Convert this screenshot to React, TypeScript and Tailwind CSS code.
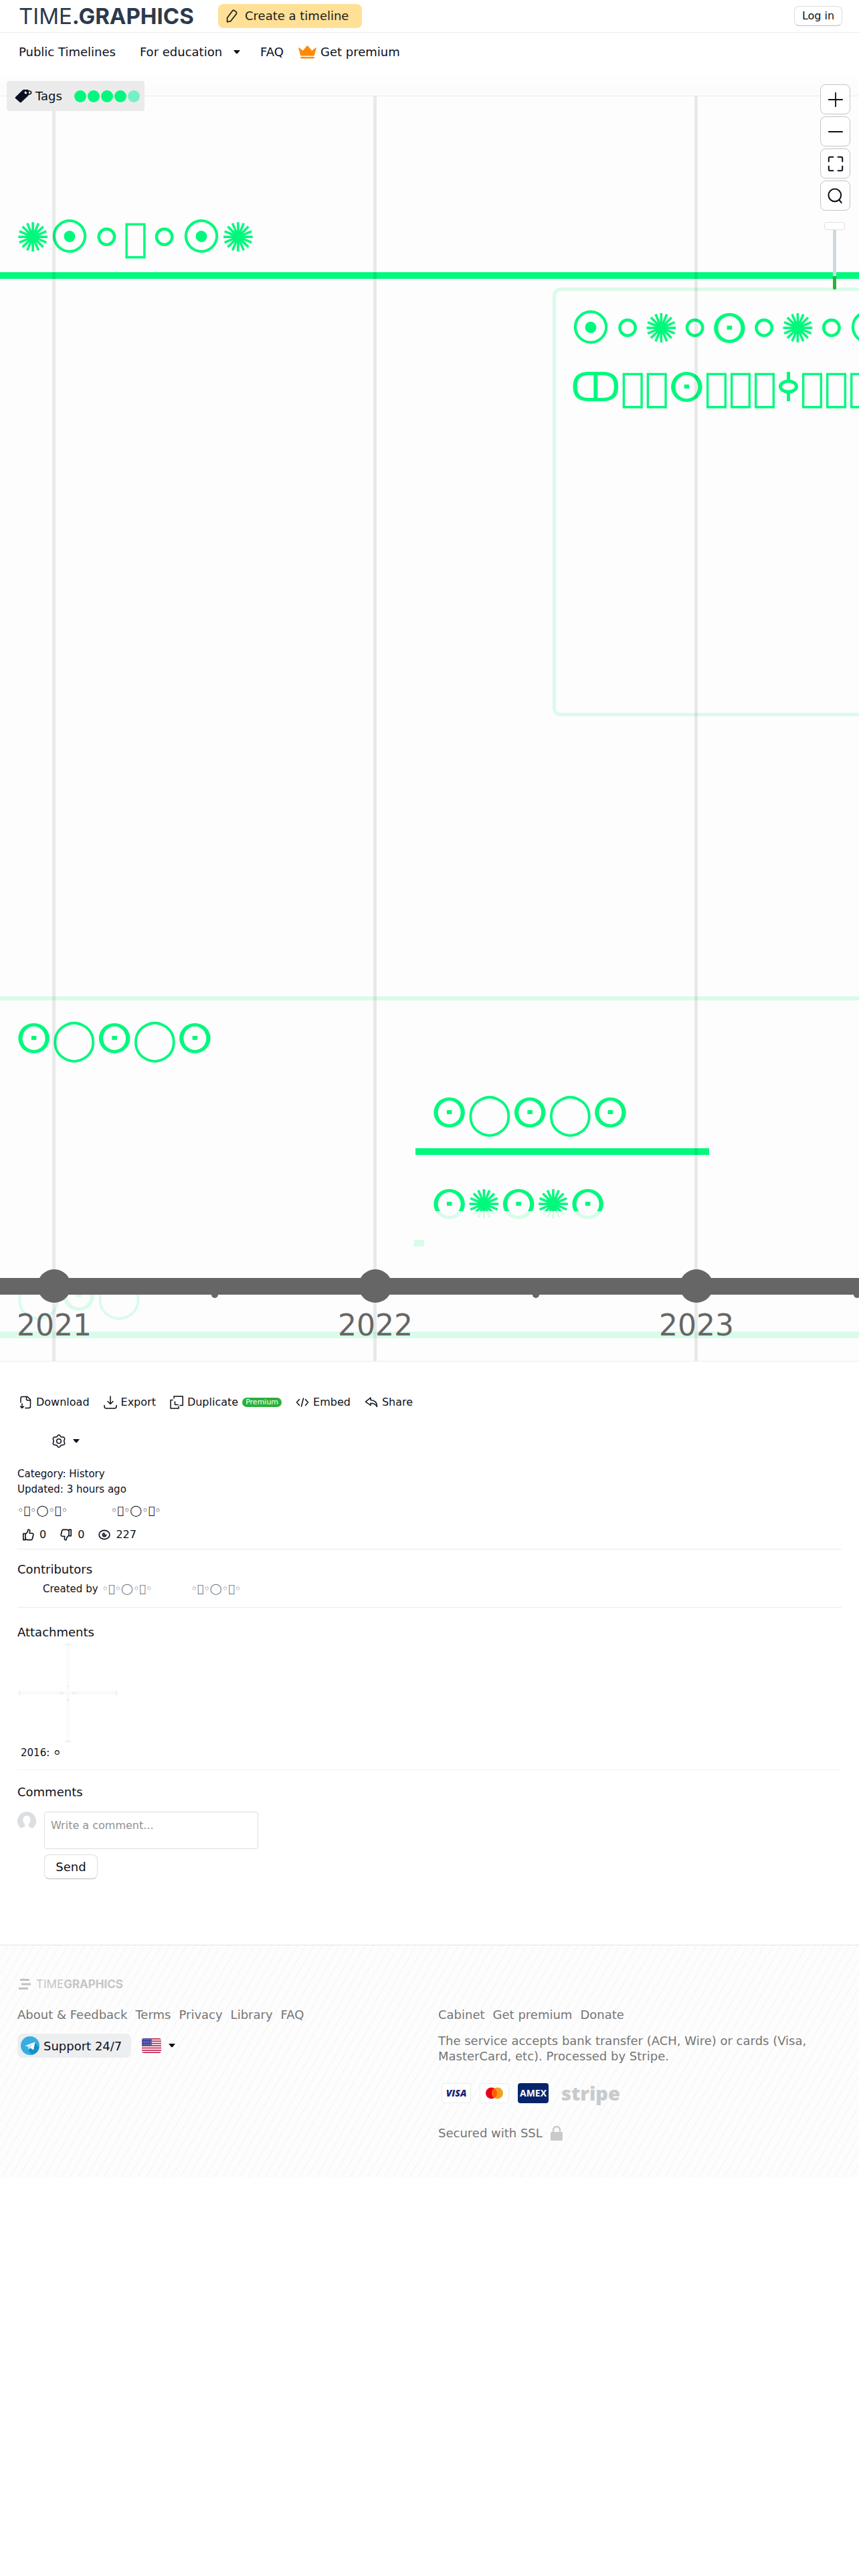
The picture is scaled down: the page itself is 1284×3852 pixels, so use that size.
import type { ReactNode } from "react";

const NAV_TEXT = "text-lg leading-6";

const YEARS = [
  { label: "2021", x: 81 },
  { label: "2022", x: 561 },
  { label: "2023", x: 1041 },
];

const HALF_YEARS = [321, 801, 1281];

const TITLES = [
  { text: "✺⦿⚪\uE0FF⚪⦿✺", x: 24, y: 166 },
  { text: "ⵙ◯ⵙ◯ⵙ", x: 24, y: 1364 },
  { text: "ⵙ◯ⵙ◯ⵙ", x: 645, y: 1475 },
  { text: "ⵙ✺ⵙ✺ⵙ", x: 645, y: 1612 },
  { text: "◯ⵙ◯", x: 24, y: 1749 },
];

const TAG_COLORS = ["#00f97c", "#00f97c", "#00f97c", "#00f97c", "#76f1c6"];

const AUTHOR = "◦\uE0FF◦◯◦\uE0FF◦";

function Caret() {
  return (
    <svg viewBox="0 0 10 6" className="w-[10px] h-[6px]" fill="currentColor" aria-hidden="true">
      <path d="M0 0h10L6.2 4.7c-.7.8-1.700.8-2.400 0z" />
    </svg>
  );
}

function LineIcon({ children, size = "w-5 h-5", width = 1.5 }: { children: ReactNode; size?: string; width?: number }) {
  return (
    <svg
      viewBox="0 0 20 20"
      className={`${size} shrink-0`}
      fill="none"
      stroke="currentColor"
      strokeWidth={width}
      strokeLinecap="round"
      strokeLinejoin="round"
      aria-hidden="true"
    >
      {children}
    </svg>
  );
}

function Header() {
  return (
    <header className="flex items-center h-[49px] border-b border-[#ebebeb] bg-white pl-7 pr-[25px]">
      <a href="#home" className="w-[298px] font-['Inter'] text-[33px] leading-10 text-[#2c3a4b]">
        TIME<b>.GRAPHICS</b>
      </a>
      <button className="flex items-center gap-[9px] h-9 pl-[9px] pr-5 rounded-lg bg-[#ffe096] text-lg text-[#1a1a1a]">
        <LineIcon size="w-[22px] h-[22px]">
          <path d="M4.200 12.500 11.300 3a2 2 0 0 1 2.900-.3l2 1.600a2 2 0 0 1 .3 2.900l-7.900 10-4.400.8z" />
        </LineIcon>
        Create a timeline
      </button>
      <button className="ml-auto h-[30px] w-[72px] rounded-lg border border-[#dddddd] border-b-[#bbbbbb] bg-white text-base leading-5">
        Log in
      </button>
    </header>
  );
}

function Nav() {
  return (
    <nav className={`flex items-start h-[94px] pt-[17px] pl-7 bg-[linear-gradient(to_bottom,#ffffff_60px,#fcfcfc_80px)] ${NAV_TEXT}`}>
      <a href="#public" className="mr-9">Public Timelines</a>
      <button className="flex items-center gap-[17px] mr-[30px]">
        For education
        <Caret />
      </button>
      <a href="#faq" className="mr-[22px]">FAQ</a>
      <a href="#premium" className="flex items-center gap-[6px]">
        <svg viewBox="0 0 27 20" className="w-[27px] h-5" fill="#ff8a00" aria-hidden="true">
          <path d="M3 14.500.3 4.200c-.2-.9.500-1.400 1.200-.8l5.200 4.300L12.500.8c.5-.8 1.300-.8 1.800 0l6 6.900 5.200-4.300c.7-.6 1.400 0 1.200.8L24 14.500c-.2.800-.5 1-1.200 1H4.200c-.7 0-1-.2-1.200-1z" />
          <rect x="3.300" y="17" width="20.400" height="2.500" rx=".6" />
        </svg>
        Get premium
      </a>
    </nav>
  );
}

function TagsBar() {
  return (
    <button className="absolute left-[10px] -top-[23px] z-20 flex items-center h-[45px] pl-3 pr-[7px] rounded bg-[#ebebeb]">
      <svg viewBox="0 0 26 21" className="w-[26px] h-[21px]" aria-hidden="true">
        <path d="M1.200 12 11 2.500C12 1.300 13 1 14.500 1H19c1.500 0 2 .7 2 2v4.500c0 1-.3 2-1.200 2.900L10 19.800c-.9.900-1.800.9-2.600 0L1.200 14.300c-.8-.8-.8-1.500 0-2.300z" fill="#0a0f1f" />
        <circle cx="16.500" cy="5.500" r="1.900" fill="#ebebeb" />
        <path d="M17 4.500c4-2.500 8.500-1.500 7.600 1.500-.5 1.800-3.200 2.400-5.800 1.200" fill="none" stroke="#0a0f1f" strokeWidth="1.600" />
      </svg>
      <span className="ml-[5px] mr-[18px] text-lg leading-6">Tags</span>
      <span className="flex gap-[2px]">
        {TAG_COLORS.map((color, i) => (
          <span key={i} className="w-[18px] h-[18px] rounded-full" style={{ backgroundColor: color }} />
        ))}
      </span>
    </button>
  );
}

function ZoomButton({ label, children }: { label: string; children: ReactNode }) {
  return (
    <button
      aria-label={label}
      className="flex items-center justify-center w-[45px] h-[45px] rounded-lg border border-[#c4c4c4] bg-white"
    >
      {children}
    </button>
  );
}

function ZoomControls() {
  return (
    <div className="absolute right-[13px] -top-[18px] z-20 flex flex-col items-center gap-[3px]">
      <ZoomButton label="Zoom in">
        <LineIcon size="w-6 h-6"><path d="M10 1.500v17M1.500 10h17" /></LineIcon>
      </ZoomButton>
      <ZoomButton label="Zoom out">
        <LineIcon size="w-6 h-6"><path d="M1.500 10h17" /></LineIcon>
      </ZoomButton>
      <ZoomButton label="Full screen">
        <LineIcon size="w-6 h-6" width={1.7}>
          <path d="M1.500 7V3q0-1.500 1.500-1.500h4M13 1.500h4q1.500 0 1.500 1.500v4M18.500 13v4q0 1.500-1.500 1.500h-4M7 18.500H3Q1.500 18.500 1.500 17v-4" />
        </LineIcon>
      </ZoomButton>
      <ZoomButton label="Search">
        <LineIcon size="w-6 h-6" width={1.7}>
          <circle cx="9" cy="9" r="7.800" />
          <path d="m14.500 15 2.800 3.500" />
        </LineIcon>
      </ZoomButton>
      <div className="flex flex-col items-center pt-[14px] pr-[3px]">
        <span className="w-[31px] h-3 rounded border border-[#e0e0e0] bg-white" />
        <span className="w-[5px] h-[69px] bg-[#d0d9dd]" />
        <span className="w-[5px] h-5 rounded-b bg-[#2bb03c]" />
      </div>
    </div>
  );
}

function Timeline() {
  return (
    <main className="relative h-[1893px] border-y border-[#ebebeb] bg-[#fdfdfd]">
      <TagsBar />
      <ZoomControls />

      <div className="absolute inset-0 overflow-hidden text-[60px] leading-[90px] text-[#00f97c] whitespace-nowrap">
        {/* Periods */}
        <div className="absolute inset-x-0 top-[263px] h-[10px] bg-[#00f97c]" />
        <div className="absolute inset-x-0 top-[1346px] h-[6px] bg-[#d9fbea]" />
        <div className="absolute left-[621px] top-[1573px] w-[439px] h-[10px] bg-[#00f97c]" />
        <div className="absolute left-[619px] top-[1710px] w-[15px] h-[10px] bg-[#00f97c]" />
        <div className="absolute inset-x-0 top-[1847px] h-[10px] bg-[#00f97c]" />

        {/* Event card */}
        <div className="absolute left-[826px] right-0 top-[286px] h-[641px] overflow-hidden rounded-l-xl border-[5px] border-r-0 border-[#d9fbea] pt-3 pl-[22px] leading-[88px]">
          <p>⦿⚪✺⚪ⵙ⚪✺⚪⦿</p>
          <p>
            ↀ{"\uE0FF\uE0FF"}ⵙ{"\uE0FF\uE0FF\uE0FF"}
            <svg viewBox="0 0 35 44" className="inline-block w-[35px] h-[44px] align-baseline" fill="none" stroke="currentColor" strokeWidth="5" aria-hidden="true">
              <ellipse cx="17.500" cy="22" rx="12" ry="8" />
              <path d="M17.500 0v14M17.500 30v14" />
            </svg>
            {"\uE0FF\uE0FF\uE0FF"}
          </p>
        </div>

        {TITLES.map((title) => (
          <p key={title.y} className="absolute" style={{ left: title.x, top: title.y }}>
            {title.text}
          </p>
        ))}

        {/* Fade over the lower part of the canvas */}
        <div className="absolute inset-x-0 top-[1667px] bottom-0 bg-[#fdfdfd]/86" />
      </div>

      {/* Axis */}
      <div className="absolute inset-0 overflow-hidden text-[#666666]">
        {YEARS.map((year) => (
          <div key={year.label} className="absolute inset-y-0 w-[5px] -ml-[3px] bg-black/8" style={{ left: year.x }} />
        ))}
        <div className="absolute inset-x-0 top-[1767px] h-[25px] bg-[#666666]" />
        {HALF_YEARS.map((x) => (
          <div key={x} className="absolute top-[1787px] w-[10px] h-[10px] -ml-[5px] rounded-full bg-[#666666]" style={{ left: x }} />
        ))}
        {YEARS.map((year) => (
          <div key={year.label} className="absolute top-[1754px] w-[120px] -ml-[60px] flex flex-col items-center" style={{ left: year.x }}>
            <span className="w-[50px] h-[50px] rounded-full bg-[#666666]" />
            <span className="mt-2 text-[44px] leading-[52px]">{year.label}</span>
          </div>
        ))}
      </div>
    </main>
  );
}

function Actions() {
  return (
    <div className="flex flex-col gap-[34px] pt-[49px]">
      <div className="flex items-center gap-[21px] pl-[2px] text-base leading-6">
        <button className="flex items-center gap-[6px]">
          <LineIcon>
            <path d="M3 10V4q0-2.500 2.500-2.500H13l4.500 4.500v10q0 2.500-2.500 2.500h-5M11.500 2v3q0 2 2 2h3.500M5 12v6.500M2.500 16 5 18.500 7.500 16" />
          </LineIcon>
          Download
        </button>
        <button className="flex items-center gap-[6px]">
          <LineIcon>
            <path d="M10 1v11M6 8.500l4 4 4-4M1 14.500v1.500q0 3 3 3h12q3 0 3-3v-1.500" />
          </LineIcon>
          Export
        </button>
        <button className="flex items-center gap-[6px]">
          <LineIcon>
            <path d="M6 4V1h13.200v13.500H15M4 6.500H1V19h12v-3M7.500 9v4.500H12" />
          </LineIcon>
          Duplicate
          <span className="h-[14px] px-[5px] rounded-full bg-[#2bb03c] text-[11px] leading-[14px] text-white">Premium</span>
        </button>
        <button className="flex items-center gap-[6px]">
          <LineIcon>
            <path d="M5.500 5.500 1.500 10l4 4.500M14.500 5.500l4 4.500-4 4.500M11.500 4l-3 12" />
          </LineIcon>
          Embed
        </button>
        <button className="flex items-center gap-[6px]">
          <LineIcon>
            <path d="M9 3 1.500 9.200 9 14.500v-3.300c4.500 0 7.500 1.500 9.500 5.300.2-5.500-2.500-9.500-9.500-10z" />
          </LineIcon>
          Share
        </button>
      </div>
      <button aria-label="Settings" className="flex items-center gap-[11px] w-fit pl-[52px] h-6">
        <LineIcon>
          <path d="M8 1.800Q10-.2 12 1.800l.8 1.700 2 .5q3-.8 4 2.200l-1.200 3.800 1.200 3.300q-.6 2.700-3.500 2.400l-2.300.5-1 2q-2 1.800-4 0l-1-2-2.300-.5q-2.900.3-3.500-2.400L2.400 10 1.200 6.200q1-3 4-2.200l2-.5z" />
          <circle cx="10" cy="10" r="3.300" />
        </LineIcon>
        <Caret />
      </button>
    </div>
  );
}

function Details() {
  return (
    <section className="pt-[26px] pb-[9px] border-b border-[#ebebeb]">
      <p className="text-[15px] leading-[23px]">Category: History</p>
      <p className="text-[15px] leading-[23px]">Updated: 3 hours ago</p>
      <p className="flex gap-[65px] mt-2 text-base leading-6">
        <span>{AUTHOR}</span>
        <span>{AUTHOR}</span>
      </p>
      <div className="flex items-center gap-[21px] mt-3 pl-[7px] text-base leading-6">
        <button className="flex items-center gap-2">
          <LineIcon size="w-[18px] h-[18px]" width={1.8}>
            <path d="M2 8h3.500v10.500H2zM5.500 9 9 5.500 10 1.500q3-.5 3 2.500L12.500 7.500H17q2 .5 1.700 2.500L17 17q-.5 1.500-2 1.500H9L5.500 17" />
          </LineIcon>
          0
        </button>
        <button className="flex items-center gap-2">
          <LineIcon size="w-[18px] h-[18px]" width={1.8}>
            <path d="M18 1.500h-3.500V12H18zM14.500 11 11 14.500l-1 4q-3 .5-3-2.500l.5-3.500H3q-2-.5-1.700-2.500L3 3q.5-1.500 2-1.500h6l3.500 1.500" />
          </LineIcon>
          0
        </button>
        <span className="flex items-center gap-2">
          <LineIcon size="w-[18px] h-[18px]" width={1.8}>
            <ellipse cx="10" cy="10" rx="8.800" ry="7.300" />
            <path d="M10 7.200a2.900 2.900 0 1 0 2.900 2.900" />
            <circle cx="10" cy="10" r=".8" />
          </LineIcon>
          227
        </span>
      </div>
    </section>
  );
}

function Contributors() {
  return (
    <section className="pt-[18px] pb-[14px] border-b border-[#ebebeb]">
      <h2 className="text-lg leading-6">Contributors</h2>
      <p className="flex items-center mt-1 pl-[38px] text-[15px] leading-[26px]">
        Created by
        <a href="#author" className="ml-[6px] mr-[58px] text-base leading-[26px] text-gray-500">{AUTHOR}</a>
        <a href="#author" className="text-base leading-[26px] text-gray-500">{AUTHOR}</a>
      </p>
    </section>
  );
}

function Attachments() {
  return (
    <section className="pt-[25px] pb-[13px] border-b border-[#f3f3f3]">
      <h2 className="text-lg leading-6">Attachments</h2>
      <figure className="w-[147px] ml-[2px] mt-[5px]">
        <svg viewBox="0 0 147 147" className="w-full" aria-hidden="true">
          <rect x="71" y="0" width="5" height="147" fill="#fbfbfb" />
          <rect x="0" y="71" width="147" height="5" fill="#fafafa" />
          <g fill="#efefef">
            <rect x="69" y="0" width="9" height="2" />
            <rect x="69" y="145" width="9" height="2" />
            <rect x="0" y="70" width="2" height="7" />
            <rect x="145" y="70" width="2" height="7" />
            <rect x="61" y="72" width="6" height="3" />
            <rect x="80" y="72" width="6" height="3" />
            <rect x="72" y="62" width="3" height="3" />
            <rect x="72" y="82" width="3" height="4" />
          </g>
        </svg>
        <figcaption className="mt-1 pl-[3px] text-[15px] leading-6">2016: ⚪</figcaption>
      </figure>
    </section>
  );
}

function Comments() {
  return (
    <section className="pt-[21px]">
      <h2 className="text-lg leading-6">Comments</h2>
      <div className="flex items-start gap-3 mt-[17px]">
        <svg viewBox="0 0 28 28" className="w-7 h-7 shrink-0" aria-hidden="true">
          <path d="M14 0a14 14 0 0 1 9 24.800c-2.500-.8-5-1.600-6-2.800-.6-1-.4-2.500.3-3.700 1.500-1.500 2.200-3.800 2.200-6C19.500 8.700 17.500 6 14 6s-5.500 2.700-5.500 6.300c0 2.200.7 4.500 2.200 6 .7 1.200.9 2.700.3 3.700-1 1.200-3.500 2-6 2.800A14 14 0 0 1 14 0z" fill="#dbdfe1" />
        </svg>
        <form className="flex flex-col items-start gap-2">
          <textarea
            aria-label="Write a comment"
            placeholder="Write a comment..."
            className="block w-80 h-14 px-[9px] py-2 resize-none rounded border border-[#dddddd] text-base leading-6 placeholder:text-[#929292]"
          />
          <button type="button" className="h-[37px] w-20 rounded-lg border border-[#dddddd] border-b-[#bbbbbb] bg-white text-lg leading-6">
            Send
          </button>
        </form>
      </div>
    </section>
  );
}

function UsFlag() {
  return (
    <svg viewBox="0 0 29 22" className="w-[29px] h-[22px] rounded-[3px]" aria-hidden="true">
      <rect width="29" height="22" fill="#fff" />
      {[0, 1, 2, 3, 4, 5, 6].map((i) => (
        <rect key={i} y={i * 3.400} width="29" height="1.700" fill="#c2214f" />
      ))}
      <rect width="14.500" height="11" fill="#3c3f9c" />
      {[0, 1, 2, 3].map((row) =>
        [0, 1, 2, 3, 4].map((col) => (
          <circle key={`${row}-${col}`} cx={1.800 + col * 2.700} cy={1.600 + row * 2.600} r=".5" fill="#fff" />
        ))
      )}
    </svg>
  );
}

function Footer() {
  return (
    <footer className="flex h-[348px] mt-[98px] border-t border-[#e3e3e3] bg-[repeating-linear-gradient(120deg,#fdfdfd_0px,#fdfdfd_10px,#ececec_11px)] pl-[26px] text-lg leading-[23px] text-[#757575]">
      <div className="w-1/2 pt-[50px]">
        <a href="#home" className="flex items-center gap-2 h-4 pl-[2px] font-['Inter'] text-[17px] leading-4 text-[#c4c6c8]">
          <svg viewBox="0 0 18 16" className="w-[18px] h-4" fill="#bfc1c3" aria-hidden="true">
            <path d="M2 0h14v3H2zM4 6.500h14v3H4zM0 13h14v3H0z" />
          </svg>
          <span>TIME<b>GRAPHICS</b></span>
        </a>
        <div className="flex gap-3 mt-[26px]">
          <a href="#about">About &amp; Feedback</a>
          <a href="#terms">Terms</a>
          <a href="#privacy">Privacy</a>
          <a href="#library">Library</a>
          <a href="#faq">FAQ</a>
        </div>
        <div className="flex items-center mt-[17px]">
          <a href="#support" className="flex items-center gap-[6px] h-9 pl-[5px] pr-[14px] rounded-lg bg-[#e9ebed]/85 text-[#0c0f1a]">
            <svg viewBox="0 0 28 28" className="w-7 h-7" aria-hidden="true">
              <circle cx="14" cy="14" r="14" fill="#38aee0" />
              <path d="M21 9 27.500 17A14 14 0 0 1 17 27.500L11 21z" fill="#1490c8" />
              <path d="M6.500 14.300 21.500 8.400 19 20.500l-4.800-3.200-2.400 2.500-.5-4.200z" fill="#fff" />
              <path d="m11.300 15.600 7.500-5-4.800 6.500-2.200 2.600z" fill="#c3dcea" />
            </svg>
            Support 24/7
          </a>
          <button aria-label="Language" className="flex items-center gap-[11px] ml-4 text-[#0c0f1a]">
            <UsFlag />
            <Caret />
          </button>
        </div>
      </div>

      <div className="w-1/2 pt-[92px] pr-10">
        <div className="flex gap-3">
          <a href="#cabinet">Cabinet</a>
          <a href="#premium">Get premium</a>
          <a href="#donate">Donate</a>
        </div>
        <p className="mt-4">
          The service accepts bank transfer (ACH, Wire) or cards (Visa, MasterCard, etc). Processed by Stripe.
        </p>
        <div className="flex items-center gap-[13px] h-10 mt-6 pl-[5px] font-['Open_Sans']">
          <span className="flex items-center justify-center w-11 h-[30px] rounded border border-[#ececec] bg-white text-sm font-extrabold italic text-[#1a1f71]">
            VISA
          </span>
          <span className="flex items-center justify-center w-11 h-[30px] rounded border border-[#ececec] bg-white">
            <svg viewBox="0 0 26 18" className="w-[26px] h-[18px]" aria-label="Mastercard">
              <circle cx="8.500" cy="9" r="8.500" fill="#eb001b" />
              <circle cx="17.500" cy="9" r="8.500" fill="#f79e1b" />
              <path d="M13 1.800a8.500 8.500 0 0 1 0 14.400 8.500 8.500 0 0 1 0-14.400z" fill="#ff5f00" />
            </svg>
          </span>
          <span className="flex items-center justify-center w-[46px] h-[30px] rounded bg-[#06246b] text-sm font-bold text-white">
            AMEX
          </span>
          <span className="ml-[6px] text-[29px] leading-10 font-extrabold text-[#c8cacc]">stripe</span>
        </div>
        <p className="flex items-center gap-3 mt-7">
          Secured with SSL
          <svg viewBox="0 0 18 22" className="w-[18px] h-[22px]" aria-hidden="true">
            <rect x="0" y="9" width="18" height="13" rx="1.500" fill="#c8cacc" />
            <path d="M4 10V6a5 5 0 0 1 10 0v4" fill="none" stroke="#c8cacc" strokeWidth="2.400" />
          </svg>
        </p>
      </div>
    </footer>
  );
}

export default function App() {
  return (
    <div className="min-h-screen bg-white font-['DejaVu_Sans',sans-serif] text-[#0c0f1a]">
      <Header />
      <Nav />
      <Timeline />
      <div className="px-[26px]">
        <Actions />
        <Details />
        <Contributors />
        <Attachments />
        <Comments />
      </div>
      <Footer />
    </div>
  );
}
